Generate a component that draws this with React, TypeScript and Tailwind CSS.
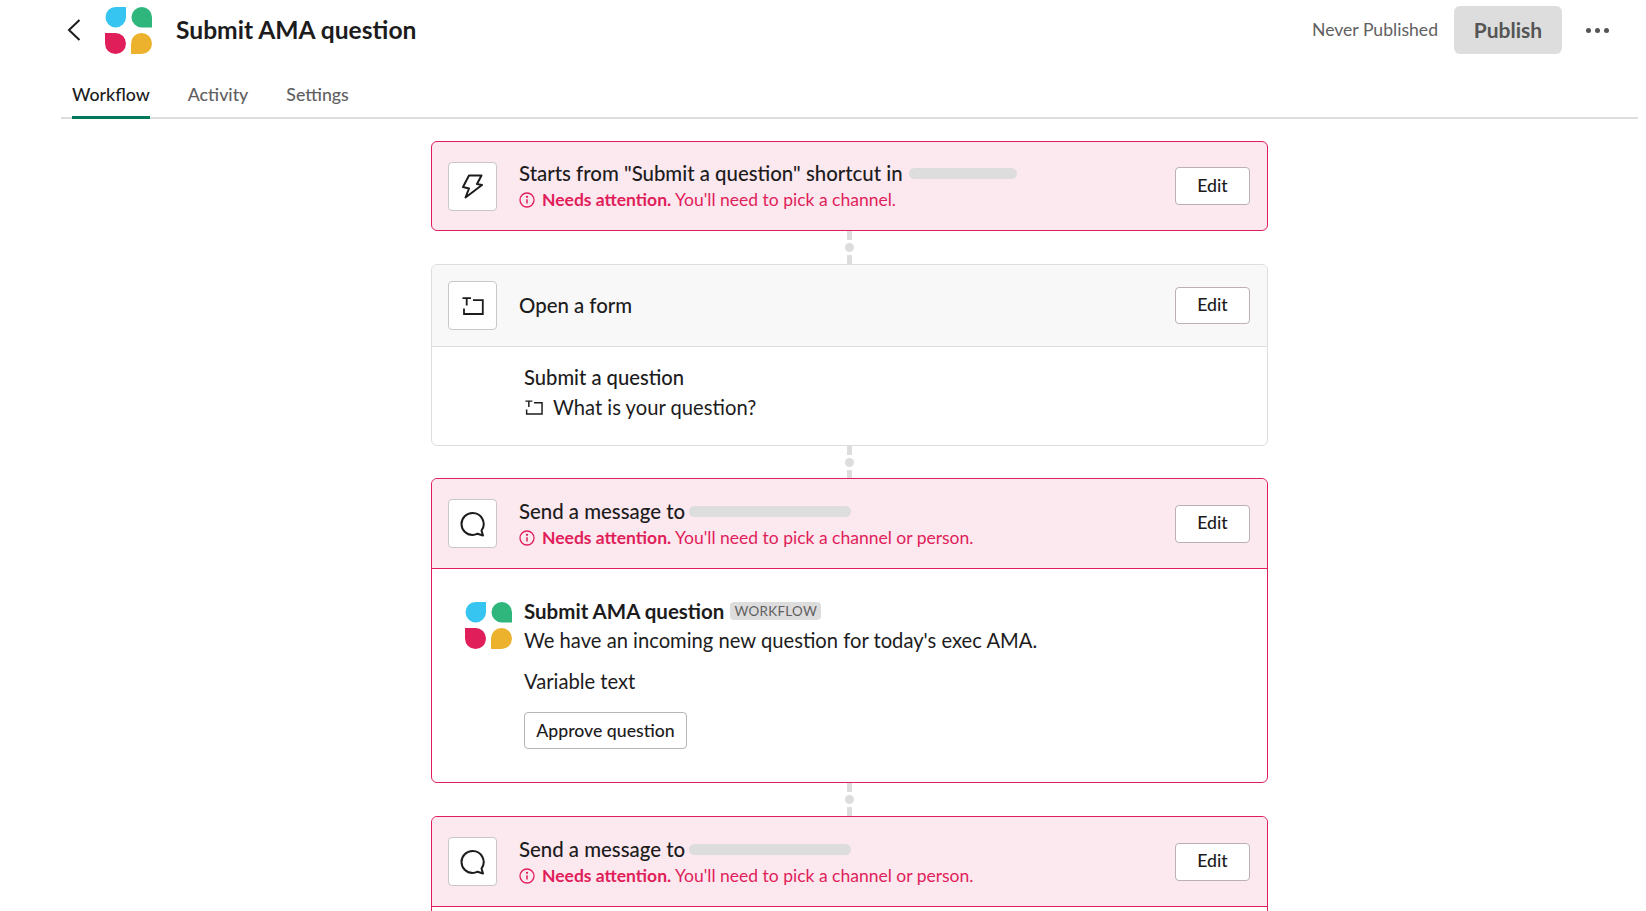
import React from "react"

const Logo = () => (
    <svg width="47" height="47" viewBox="0 0 47 47" className="shrink-0">
        <path d="M21 0v10.500A10.250 10.250 0 1 1 10.500 0z" fill="#36c5f0" />
        <path d="M47 20.500H36.500A10.250 10.250 0 1 1 47 10.250z" fill="#2eb67d" />
        <path d="M0 26h10.500A10.500 10.500 0 1 1 0 36.500z" fill="#e01e5a" />
        <path d="M26 47V36.500A10.500 10.500 0 1 1 36.500 47z" fill="#ecb22e" />
    </svg>
)

const BoltIcon = () => (
    <svg width="21" height="25" viewBox="0 0 21 25" fill="none" stroke="#1d1c1d" strokeWidth="2" strokeLinejoin="round" strokeLinecap="round">
        <path d="M7 1.500h12.500L15 10l5 1L3.500 23.500 7 14.500l-6-1.500z" />
    </svg>
)

const FormIcon = ({ width = 22, height = 18 }: { width?: number; height?: number }) => (
    <svg width={width} height={height} viewBox="0 0 22 18" fill="none" stroke="#1d1c1d" strokeWidth="1.800" className="shrink-0">
        <path d="M0.500 1.200h8.500M4.700 1.200v7.300" />
        <path d="M11 3.200h9.800v13.800H2V11.500" />
    </svg>
)

const MessageIcon = () => (
    <svg width="26" height="26" viewBox="0 0 26 26" fill="none" stroke="#1d1c1d" strokeWidth="2" strokeLinejoin="round">
        <path d="M12.500 2a11 11 0 1 0 0 22c2 0 3.500-.5 5-1.300l5.500 1.800-1.500-5A11 11 0 0 0 12.500 2z" />
    </svg>
)

const InfoIcon = () => (
    <svg width="16" height="16" viewBox="0 0 16 16" fill="none" stroke="#e01e5a" strokeWidth="1.300" className="shrink-0">
        <circle cx="8" cy="8" r="7" />
        <path d="M8 7.200v4.300" strokeWidth="1.500" />
        <circle cx="8" cy="4.800" r="0.500" fill="#e01e5a" />
    </svg>
)

const IconBox = ({ children }: any) => (
    <div className="flex h-[49px] w-[49px] shrink-0 items-center justify-center rounded bg-white border border-[#c8c8c8]">
        {children}
    </div>
)

const EditButton = ({ tall = true }: { tall?: boolean }) => (
    <button className={`${tall ? "h-[38px]" : "h-[37px]"} w-[75px] shrink-0 rounded bg-white border border-[#bbb0b4] text-[17.7px] font-medium text-[#1d1c1d]`}>
        Edit
    </button>
)

const Attention = ({ text }: { text: string }) => (
    <div className="flex items-center gap-[7px] text-[17.5px] leading-[24px] text-[#e01e5a] mt-[1px]">
        <InfoIcon />
        <span><span className="font-bold">Needs attention.</span> {text}</span>
    </div>
)

const Skeleton = ({ className }: { className: string }) => (
    <span className={`${className} inline-block h-[11px] rounded-full bg-[#dddddd]`} />
)

const Connector = ({ height = "h-[33px]" }: { height?: string }) => (
    <div className={`${height} flex flex-col items-center`}>
        <div className="h-[9px] w-[5px] bg-[#dddddd]" />
        <div className="mt-[3px] h-[9px] w-[9px] rounded-full bg-[#dddddd]" />
        <div className="mt-[3px] flex-1 w-[5px] bg-[#dddddd]" />
    </div>
)

const MessageHeader = () => (
    <div className="flex h-[90px] items-center rounded-t-md border-b border-[#e01e5a] bg-[#fce8ef] pl-[16px] pr-[17px]">
        <IconBox><MessageIcon /></IconBox>
        <div className="ml-[22px] flex-1">
            <div className="flex items-center text-[20.4px] leading-[28px] font-medium">
                Send a message to<Skeleton className="ml-[4px] w-[162px]" />
            </div>
            <Attention text="You'll need to pick a channel or person." />
        </div>
        <EditButton />
    </div>
)

const MessageBody = () => (
    <div className="flex h-[213px] gap-[12px] pl-[33px] pt-[33px]">
        <Logo />
        <div className="-mt-[6px] text-[20.2px] leading-[30px] text-[#1d1c1d]">
            <div className="flex h-[29px] items-center">
                <span className="text-[20.5px] font-bold">Submit AMA question</span>
                <span className="ml-[6px] rounded-sm bg-[#dddddd] px-[4px] text-[13.4px] leading-[18px] text-[#616061] tracking-wide">WORKFLOW</span>
            </div>
            <div>We have an incoming new question for today's exec AMA.</div>
            <div className="mt-[11px]">Variable text</div>
            <button className="mt-[16px] block h-[37px] w-[163px] rounded bg-white border border-[#b5b5b5] text-[17.7px] leading-[24px] font-medium">
                Approve question
            </button>
        </div>
    </div>
)

export default function App() {
    return (
        <div className="h-[911px] w-[1646px] overflow-hidden bg-white font-[Lato,sans-serif] text-[#1d1c1d]">
            <div className="flex h-[60px] items-center pl-[67px] pr-[37px]">
                <svg width="14" height="22" viewBox="0 0 14 22" fill="none" stroke="#1d1c1d" strokeWidth="2" className="shrink-0">
                    <path d="M12.500 1L2 11l10.500 10" />
                </svg>
                <div className="ml-[24px]"><Logo /></div>
                <h1 className="ml-[24px] text-[24.6px] font-bold">Submit AMA question</h1>
                <div className="ml-auto text-[17.6px] text-[#616061]">Never Published</div>
                <button className="ml-[16px] h-[48px] w-[108px] rounded-md bg-[#dddddd] text-[21px] font-bold text-[#555555]">Publish</button>
                <div className="ml-[24px] flex gap-[4px]">
                    <span className="h-[5px] w-[5px] rounded-full bg-[#555555]" />
                    <span className="h-[5px] w-[5px] rounded-full bg-[#555555]" />
                    <span className="h-[5px] w-[5px] rounded-full bg-[#555555]" />
                </div>
            </div>
            <div className="ml-[61px] mr-[8px] flex h-[59px] items-end gap-[38px] border-b-2 border-[#dddddd] pl-[11px]">
                <div className="-mb-[2px] h-[47px] border-b-[3px] border-[#007a5a] text-[17.76px] leading-[44px] font-medium">Workflow</div>
                <div className="h-[45px] text-[17.76px] leading-[44px] font-medium text-[#616061]">Activity</div>
                <div className="h-[45px] text-[17.76px] leading-[44px] font-medium text-[#616061]">Settings</div>
            </div>
            <div className="ml-[431px] mt-[22px] w-[837px]">
                <div className="flex h-[90px] items-center rounded-md border border-[#e01e5a] bg-[#fce8ef] pl-[16px] pr-[17px]">
                    <IconBox><BoltIcon /></IconBox>
                    <div className="ml-[22px] flex-1">
                        <div className="-mt-[1px] mb-[1px] flex items-center text-[20.4px] leading-[28px] font-medium">
                            Starts from "Submit a question" shortcut in<Skeleton className="ml-[6px] w-[108px]" />
                        </div>
                        <Attention text="You'll need to pick a channel." />
                    </div>
                    <EditButton />
                </div>
                <Connector />
                <div className="rounded-md border border-[#dddddd]">
                    <div className="flex h-[82px] items-center rounded-t-md border-b border-[#dddddd] bg-[#f8f8f8] pl-[16px] pr-[17px]">
                        <IconBox><FormIcon /></IconBox>
                        <div className="ml-[22px] flex-1 text-[20.4px] font-medium">Open a form</div>
                        <EditButton tall={false} />
                    </div>
                    <div className="h-[98px] pl-[92px] pt-[15px] text-[20.2px] leading-[30px]">
                        <div className="font-medium">Submit a question</div>
                        <div className="ml-[1px] flex items-center gap-[10px]"><FormIcon width={18} height={15} />What is your question?</div>
                    </div>
                </div>
                <Connector height="h-[32px]" />
                <div className="rounded-md border border-[#e01e5a]">
                    <MessageHeader />
                    <MessageBody />
                </div>
                <Connector />
                <div className="rounded-md border border-[#e01e5a]">
                    <MessageHeader />
                    <MessageBody />
                </div>
            </div>
        </div>
    )
}
